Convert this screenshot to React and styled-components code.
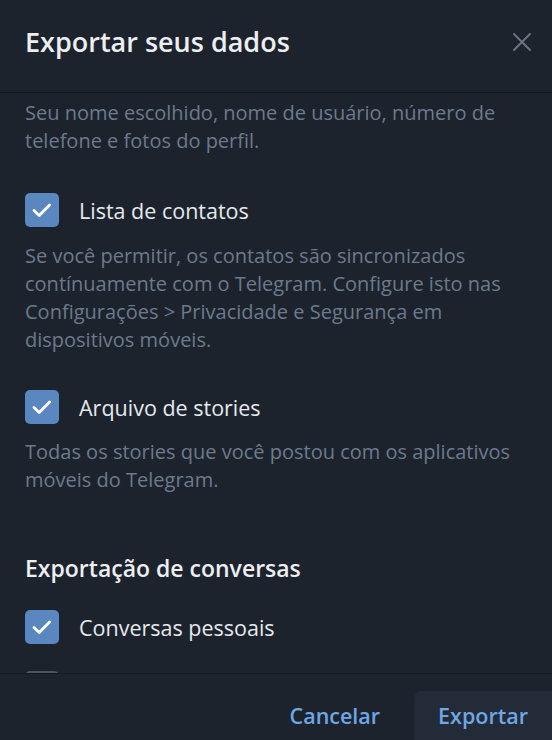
import styled, { createGlobalStyle } from 'styled-components';
import { useState } from 'react';

const GlobalStyle = createGlobalStyle`
  html, body {
    margin: 0;
    padding: 0;
    background: #1c232d;
  }
  body {
    font-family: "Open Sans", "Noto Sans", sans-serif;
  }
`

const Dialog = styled.div`
  width: 552px;
  height: 740px;
  background-color: #1c232d;
  display: flex;
  flex-direction: column;
  overflow: hidden;
`

const Header = styled.div`
  height: 93px;
  flex-shrink: 0;
  display: flex;
  align-items: flex-start;
  justify-content: space-between;
  padding: 22px 10px 0 25px;
  border-bottom: 1px solid #141a21;
  box-sizing: border-box;

  & .title {
    margin: 0;
    font-size: 27px;
    line-height: 40px;
    font-weight: 600;
    color: #eceef1;
  }
`

const CloseButton = styled.button`
  width: 40px;
  height: 40px;
  border: none;
  background: none;
  padding: 0;
  display: flex;
  align-items: center;
  justify-content: center;
  cursor: pointer;
`

const Body = styled.div`
  flex: 1;
  overflow: hidden;
  padding: 6px 25px 0;
`

const Description = styled.p`
  margin: ${p => p.$top || 0}px 0 0;
  font-size: 20px;
  line-height: 28px;
  color: #6c7a8c;
`

const CheckRow = styled.label`
  display: flex;
  align-items: center;
  gap: 20px;
  margin-top: ${p => p.$top || 0}px;
  cursor: pointer;
  font-size: 21.5px;
  color: #e6e9ed;
  height: 34px;
`

const Box = styled.span`
  width: 34px;
  height: 34px;
  flex-shrink: 0;
  border-radius: 5px;
  background-color: ${p => (p.$checked ? '#5b87c0' : '#4a5465')};
  display: flex;
  align-items: center;
  justify-content: center;
`

const SectionTitle = styled.h3`
  margin: 60px 0 0;
  font-size: 23px;
  font-weight: 600;
  line-height: 28px;
  color: #eceef1;
`

const Footer = styled.div`
  height: 66px;
  flex-shrink: 0;
  border-top: 1px solid #141a21;
  display: flex;
  align-items: flex-end;
  justify-content: flex-end;
  gap: 34px;
`

const TextButton = styled.button`
  border: none;
  background: ${p => (p.$active ? '#232b38' : 'transparent')};
  color: #6ea7e3;
  font-family: inherit;
  font-size: 21.5px;
  font-weight: 600;
  height: 49px;
  padding: ${p => (p.$active ? '0 40px 0 24px' : '0')};
  border-radius: ${p => (p.$active ? '8px 0 0 0' : '0')};
  cursor: pointer;
  margin-right: ${p => (p.$active ? '-16px' : '0')};
`

function Check() {
  return (
    <svg width="34" height="34" viewBox="0 0 34 34" fill="none">
      <path d="M9 17.5 L14.2 22.4 L24.6 12" stroke="#fff" strokeWidth="2.8" strokeLinecap="round" strokeLinejoin="round" />
    </svg>
  )
}

function Option({ label, checked, onToggle, top }) {
  return (
    <CheckRow $top={top} onClick={onToggle}>
      <Box $checked={checked}>{checked && <Check />}</Box>
      {label}
    </CheckRow>
  )
}

function App() {
  const [opts, setOpts] = useState({ contacts: true, stories: true, personal: true, bots: false })
  const toggle = key => () => setOpts({ ...opts, [key]: !opts[key] })

  return (
    <Dialog>
      <GlobalStyle />
      <Header>
        <h2 className="title">Exportar seus dados</h2>
        <CloseButton aria-label="Fechar">
          <svg width="20" height="20" viewBox="0 0 20 20">
            <path d="M2 2 L18 18 M18 2 L2 18" stroke="#6b7480" strokeWidth="2" strokeLinecap="round" />
          </svg>
        </CloseButton>
      </Header>
      <Body>
        <Description>
          Seu nome escolhido, nome de usuário, número de telefone e fotos do perfil.
        </Description>
        <Option top={38} label="Lista de contatos" checked={opts.contacts} onToggle={toggle('contacts')} />
        <Description $top={15}>
          Se você permitir, os contatos são sincronizados contínuamente com o Telegram. Configure isto nas Configurações &gt; Privacidade e Segurança em dispositivos móveis.
        </Description>
        <Option top={36} label="Arquivo de stories" checked={opts.stories} onToggle={toggle('stories')} />
        <Description $top={14}>
          Todas os stories que você postou com os aplicativos móveis do Telegram.
        </Description>
        <SectionTitle>Exportação de conversas</SectionTitle>
        <Option top={28} label="Conversas pessoais" checked={opts.personal} onToggle={toggle('personal')} />
        <Option top={27} label="Conversas com bots" checked={opts.bots} onToggle={toggle('bots')} />
      </Body>
      <Footer>
        <TextButton>Cancelar</TextButton>
        <TextButton $active>Exportar</TextButton>
      </Footer>
    </Dialog>
  )
}

export default App;
